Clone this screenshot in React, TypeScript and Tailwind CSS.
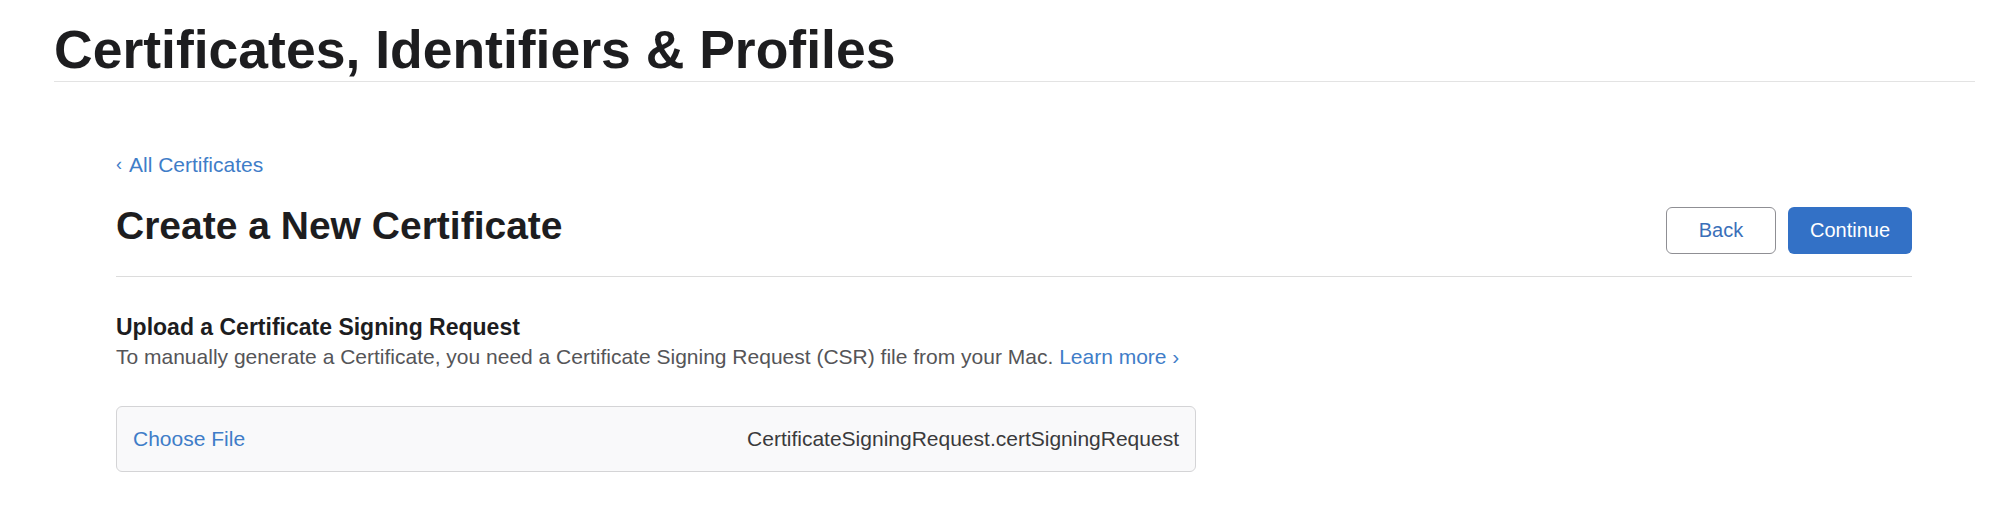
const font = { fontFamily: '"Liberation Sans", Arial, sans-serif' }

export default function App() {
  return (
    <div className="min-h-[512px] w-[2000px] bg-white text-[#1d1d1f]" style={font}>
      {/* page header */}
      <header className="ml-[54px] mr-[25px] border-b border-[#e3e3e3] pt-[23px] pb-[4px]">
        <h1 className="text-[53.5px] font-bold leading-none">Certificates, Identifiers &amp; Profiles</h1>
      </header>

      <main className="ml-[116px] w-[1796px]">
        <a href="#" className="mt-[72px] flex items-center text-[21px] leading-none text-[#3f7dc8]">
          <span className="mr-[7px] text-[18px]">‹</span>
          All Certificates
        </a>

        <div className="mt-[30px] flex items-start justify-between border-b border-[#dcdcdc] pb-[22px]">
          <h2 className="mt-[1px] text-[39px] font-bold leading-none">Create a New Certificate</h2>
          <div className="mt-[2px] flex gap-[12px]">
            <button className="h-[47px] w-[110px] rounded-[6px] border border-[#8f8f94] bg-white text-[20px] text-[#3a6fb9]">
              Back
            </button>
            <button className="h-[47px] w-[124px] rounded-[6px] bg-[#3371c6] text-[20px] text-white">
              Continue
            </button>
          </div>
        </div>

        <section className="mt-[39px]">
          <h3 className="text-[23px] font-bold leading-none">Upload a Certificate Signing Request</h3>
          <p className="mt-[7px] text-[21px] leading-none text-[#555558]">
            To manually generate a Certificate, you need a Certificate Signing Request (CSR) file from your Mac.{' '}
            <a href="#" className="text-[#3f7dc8]">Learn more ›</a>
          </p>

          <div className="mt-[39px] flex h-[66px] w-[1080px] items-center justify-between rounded-[6px] border border-[#d4d4d6] bg-[#f9f9fa] pl-[16px] pr-[16px]">
            <span className="text-[21px] text-[#3f7dc8]">Choose File</span>
            <span className="text-[21px] text-[#3a3a3c]">CertificateSigningRequest.certSigningRequest</span>
          </div>
        </section>
      </main>
    </div>
  )
}
